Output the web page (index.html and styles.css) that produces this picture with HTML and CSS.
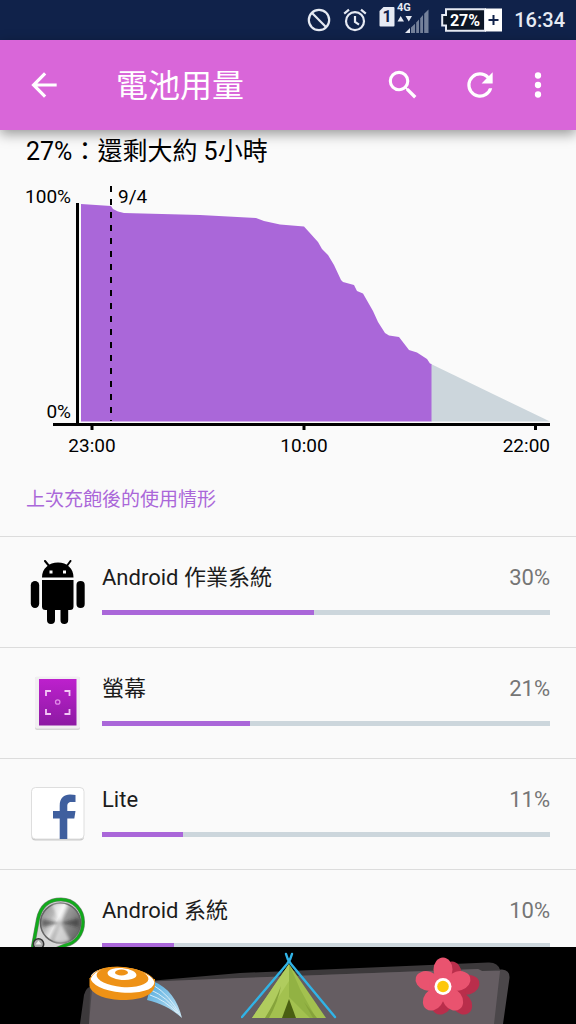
FILE: index.html
```html
<!DOCTYPE html>
<html lang="zh-Hant">
<head>
<meta charset="utf-8">
<meta name="viewport" content="width=device-width, initial-scale=1">
<title>電池用量</title>
<link rel="stylesheet" href="styles.css">
</head>
<body>
<div class="screen">
  <div class="status">
    <svg class="status-icon" viewBox="0 0 24 24" width="24" height="24" aria-hidden="true"><g fill="none" stroke="#e6eaf3" stroke-width="2.2"><circle cx="12" cy="12" r="10.2"/><path d="M4.8 4.8 19.2 19.2"/></g></svg>
    <svg class="status-icon" viewBox="0 0 24 24" width="24" height="24" aria-hidden="true"><g fill="none" stroke="#e6eaf3" stroke-width="2.2"><circle cx="12" cy="13.2" r="9"/><path d="M12 8v6l4 2.6M1.2 5.6 6 1.6M22.8 5.6 18 1.6"/></g></svg>
    <svg class="status-icon" viewBox="0 -3 50 40" width="50" height="40" role="img" aria-label="SIM 1 4G">
      <path fill="#e6eaf3" d="M4.5 4H14.5Q15.500 4 15.500 5V22.500Q15.500 23.500 14.500 23.500H1.500Q.5 23.500 .5 22.500V8Z"/>
      <text class="sim-number" x="8" y="19" text-anchor="middle">1</text>
      <text class="network" x="18" y="8">4G</text>
      <path fill="#e6eaf3" d="M18.500 18.500 21.700 13 25 18.500ZM26.500 13h6.500l-3.200 5.500Z"/>
      <path fill="#74819a" d="M32 24.500 36 20.800V30H32ZM37.200 19.500 40 16.500V30H37.200ZM41.200 15.300 44 12V30H41.200ZM45.200 10.700 49.500 6.500V30H45.200Z"/>
      <path fill="#e6eaf3" d="M26 30 31 25V30Z"/>
    </svg>
    <svg class="status-icon" viewBox="0 0 61 24" width="61" height="24" role="img" aria-label="27%">
      <path d="M5 1.200H44V22.800H5V17.500H1.200V7H5Z" fill="#0b1526" stroke="#e6eaf3" stroke-width="2"/>
      <path fill="#fff" d="M44 .5H61V23.500H44Z"/>
      <path fill="none" stroke="#10224a" stroke-width="2" d="M52.500 7v10M47.500 12h10"/>
      <text class="battery-level" x="24" y="18" text-anchor="middle">27%</text>
    </svg>
    <time class="clock">16:34</time>
  </div>

  <header class="appbar">
    <button class="bar-button back" type="button" aria-label="返回"><svg viewBox="0 0 24 24" width="38" height="38"><path d="M20 11H7.830l5.590-5.590L12 4l-8 8 8 8 1.410-1.410L7.830 13H20z"/></svg></button>
    <h1 class="appbar-title">電池用量</h1>
    <button class="bar-button" type="button" aria-label="搜尋"><svg viewBox="0 0 24 24" width="38" height="38"><path d="M15.500 14h-.79l-.28-.27A6.471 6.471 0 0 0 16 9.500 6.500 6.500 0 1 0 9.500 16c1.610 0 3.090-.59 4.230-1.570l.27.28v.79l5 4.990L20.490 19l-4.990-5zm-6 0C7.010 14 5 11.990 5 9.500S7.010 5 9.500 5 14 7.010 14 9.500 11.990 14 9.500 14z"/></svg></button>
    <button class="bar-button" type="button" aria-label="重新整理"><svg viewBox="0 0 24 24" width="38" height="38"><path d="M17.650 6.350A7.958 7.958 0 0 0 12 4a8 8 0 1 0 7.730 10h-2.080A6 6 0 1 1 12 6c1.660 0 3.140.69 4.220 1.780L13 11h7V4z"/></svg></button>
    <button class="bar-button more" type="button" aria-label="更多選項"><svg viewBox="0 0 24 24" width="38" height="38"><path d="M12 8a2 2 0 1 0 0-4 2 2 0 0 0 0 4zm0 2a2 2 0 1 0 0 4 2 2 0 0 0 0-4zm0 6a2 2 0 1 0 0 4 2 2 0 0 0 0-4z"/></svg></button>
  </header>

  <main class="content">
    <section class="usage">
      <p class="summary">27%：還剩大約 5小時</p>
      <svg class="chart" viewBox="26 184 524 276" role="img" aria-label="電池電量圖表">
        <path fill="#ccd6dc" d="M431 364 550 421.500H431Z"/>
        <path fill="#aa67d9" d="M81 204 111 206 113 209 118 211.500 124 213 200 215 256 218 264 221 280 224.500 304 226.500 309 232 318 242 322 249 328 255 334 265 341 280 343 282 354 285 357 291 363 293.500 373 311 378 322 385 333 389 335.500 399 337 409 350 417 352.500 427 359 430 363.500 431.500 364V421.500H81Z"/>
        <path class="midnight" d="M111 186V421"/>
        <path class="axis" d="M77.500 203V424M53 424.500H550.500M92 425V430M304 425V430M535.500 425V430"/>
        <g class="chart-label">
          <text x="71" y="203" text-anchor="end">100%</text>
          <text x="118" y="203">9/4</text>
          <text x="71" y="418" text-anchor="end">0%</text>
          <text x="92" y="452" text-anchor="middle">23:00</text>
          <text x="304" y="452" text-anchor="middle">10:00</text>
          <text x="550" y="452" text-anchor="end">22:00</text>
        </g>
      </svg>
    </section>
    <h2 class="section-title">上次充飽後的使用情形</h2>
    <ul class="apps">
      <li class="app">
        <svg class="app-icon" viewBox="0 0 64 64" width="64" height="64" aria-hidden="true">
          <path d="M16 17.500C16 8.500 23 2.500 32 2.500S47.500 8.500 47.500 17.500ZM16 20H47.500V46.500Q47.500 50 44 50H42.200V60Q42.200 64 38.300 64T34.500 60V50H29V60Q29 64 25 64T21 60V50H19.500Q16 50 16 46.500Z"/>
          <rect x="4.800" y="21" width="8.400" height="27" rx="4.200"/><rect x="50.500" y="21" width="8.200" height="27" rx="4.100"/>
          <path d="M19 1 23.500 6.500M44.500 1 40.500 6.500" stroke="#000" stroke-width="2" stroke-linecap="round"/>
          <rect x="23.500" y="10.500" width="3" height="3" fill="#fff"/><rect x="37" y="10.500" width="3" height="3" fill="#fff"/>
        </svg>
        <div class="app-body">
          <div class="app-line"><label class="app-name" for="use-os">Android 作業系統</label><span class="app-share">30%</span></div>
          <progress class="bar" id="use-os" max="448" value="212"></progress>
        </div>
      </li>
      <li class="app">
        <svg class="app-icon" viewBox="0 0 64 64" width="64" height="64" aria-hidden="true">
          <defs><linearGradient id="panel" x1="0" y1="0" x2="0" y2="1"><stop offset="0" stop-color="#bd20cd"/><stop offset="1" stop-color="#8d1aa3"/></linearGradient></defs>
          <rect x="9" y="6" width="45" height="53" rx="2" fill="#d6d6d6"/>
          <rect x="9" y="5.500" width="45" height="52" rx="2" fill="#f1eff1"/>
          <rect x="13" y="8" width="37.500" height="46.500" fill="url(#panel)"/>
          <path fill="none" stroke="#f2c7f5" stroke-width="1.800" d="M20 25V20H25M38.500 20H43.500V25M43.500 38V43H38.500M25 43H20V38"/>
          <circle cx="31.700" cy="31" r="2.200" fill="none" stroke="#e08be8" stroke-width="1.300"/>
        </svg>
        <div class="app-body">
          <div class="app-line"><label class="app-name" for="use-display">螢幕</label><span class="app-share">21%</span></div>
          <progress class="bar" id="use-display" max="448" value="148"></progress>
        </div>
      </li>
      <li class="app">
        <svg class="app-icon" viewBox="0 0 64 64" width="64" height="64" aria-hidden="true">
          <rect x="5.500" y="6" width="52.500" height="52.500" rx="4" fill="#c9c9c9"/>
          <rect x="5.500" y="5.500" width="52.500" height="51.500" rx="4" fill="#fff" stroke="#dedede"/>
          <path fill="#3f5f9e" d="M33.700 57V36.500H27V29H33.700V24C33.700 16 38 12.600 44 12.600Q47.500 12.600 49.500 13.100V20H45.500C42.300 20 41.300 21.500 41.300 24.500V29H49.500L48.300 36.500H41.300V57Z"/>
        </svg>
        <div class="app-body">
          <div class="app-line"><label class="app-name" for="use-lite">Lite</label><span class="app-share">11%</span></div>
          <progress class="bar" id="use-lite" max="448" value="81"></progress>
        </div>
      </li>
      <li class="app">
        <svg class="app-icon" viewBox="0 0 64 64" width="64" height="64" aria-hidden="true">
          <defs>
            <linearGradient id="metal" x1="0" y1="0" x2="1" y2=".5"><stop offset="0" stop-color="#8b8b8b"/><stop offset=".35" stop-color="#b6b6b6"/><stop offset=".5" stop-color="#e6e6e6"/><stop offset=".65" stop-color="#999"/><stop offset="1" stop-color="#6e6e6e"/></linearGradient>
            <filter id="soft"><feGaussianBlur stdDeviation="1.500"/></filter>
          </defs>
          <path d="M7 53 12 26C15 12 24 6.500 35 6.500C48 6.500 57 17 57 29C57 42 49 50 40 52L16 62C10 64 6 59 7 53Z" fill="#d6d6d6" stroke="#888" stroke-width="4"/>
          <path d="M7 53 12 26C15 12 24 6.500 35 6.500C48 6.500 57 17 57 29C57 42 49 50 40 52L16 62C10 64 6 59 7 53Z" fill="none" stroke="#12a91c" stroke-width="3"/>
          <circle cx="34.500" cy="30" r="20" fill="url(#metal)" stroke="#666" stroke-width="1.500"/>
          <g filter="url(#soft)">
            <path d="M34.500 30 26 12A19 19 0 0 1 41 12ZM34.500 30 27 48A19 19 0 0 0 44 47Z" fill="#fff" opacity=".6"/>
            <path d="M34.500 30 53 25V34ZM34.500 30 16 26V34Z" fill="#222" opacity=".5"/>
          </g>
          <circle cx="12.500" cy="51" r="5.200" fill="#aaa" stroke="#333" stroke-width="1.500"/><path d="M9.500 51.500 12.500 47.500 15.500 51.500Z" fill="#eee"/>
        </svg>
        <div class="app-body">
          <div class="app-line"><label class="app-name" for="use-system">Android 系統</label><span class="app-share">10%</span></div>
          <progress class="bar" id="use-system" max="448" value="72"></progress>
        </div>
      </li>
    </ul>
  </main>

  <nav class="navbar" aria-label="系統導覽">
    <svg class="navbar-backdrop" viewBox="0 0 576 77" preserveAspectRatio="none" aria-hidden="true">
      <path fill="#3c393b" d="M80 77 84 48Q86 40 92 39L240 26 488 15.500Q498 15 500 23L496 77Z"/>
      <path fill="#4b474a" d="M89 77 90 42Q91 40 99 39L240 31 478 22 482 24 502 22.500Q510 23 509.500 31L503 77Z"/>
      <path fill="#655d62" d="M89 77 92 42Q94 38 100 36.500L240 31 478 22 482 24H500L494 77Z"/>
    </svg>
    <button class="nav-button" type="button" aria-label="返回">
      <svg viewBox="0 0 100 77" width="100" height="77">
        <defs><linearGradient id="trail" x1="0" y1="0" x2="1" y2="1"><stop offset="0" stop-color="#4ba8de"/><stop offset="1" stop-color="#c8e4f2"/></linearGradient></defs>
        <path fill="url(#trail)" d="M67 34C84 40 93 54 97 71C86 61 75 56 62 53Z"/>
        <path fill="none" stroke="#d8eefa" stroke-width="1" d="M68 38Q85 48 95 68M66 43Q82 50 93 66M65 48Q80 53 92 66"/>
        <path fill="#ee9216" d="M4.500 31V39C7 48 22 53 38 53C56 53 69 48 70 38V32Z"/>
        <ellipse cx="37.500" cy="33" rx="32" ry="12.500" transform="rotate(5 37 33)" fill="#fff"/>
        <ellipse cx="37.500" cy="30" rx="26" ry="10" transform="rotate(5 38 30)" fill="#ee9216"/>
        <ellipse cx="37" cy="27" rx="14.500" ry="6" transform="rotate(5 37 27)" fill="#fff"/>
        <ellipse cx="36.500" cy="25.500" rx="6.500" ry="3" fill="#ee9216"/>
        <path fill="none" stroke="#ee9216" stroke-width="1" d="M5 32C10 21 24 19.500 37 20.500S66 26 69.500 34"/>
      </svg>
    </button>
    <button class="nav-button" type="button" aria-label="主畫面">
      <svg viewBox="0 0 100 77" width="100" height="77">
        <path fill="#a3c14f" d="M48 17 11 71H85Z"/>
        <path fill="#b0cc5e" d="M48 17 11 71H24L48 34Z"/>
        <path fill="#87a83c" d="M48 17V50L69 71H75L59 42Z" opacity=".6"/>
        <path fill="#86a33b" d="M40 39Q34 55 24 71H28Q37 55 40 39ZM63 55 76 71H72Z"/>
        <path fill="#495f12" d="M48 52 41 71H55Z"/>
        <path fill="none" stroke="#31b3e6" stroke-width="2.400" stroke-linecap="round" d="M51 7Q50 12 46 17L1 70M45 7Q46 12 50 17L94 70"/>
      </svg>
    </button>
    <button class="nav-button" type="button" aria-label="最近使用的應用程式">
      <svg viewBox="0 0 100 77" width="100" height="77">
        <defs><g id="petals"><ellipse cx="46" cy="22.500" rx="9.500" ry="12"/><ellipse cx="46" cy="22.500" rx="9.500" ry="12" transform="rotate(72 46 39)"/><ellipse cx="46" cy="22.500" rx="9.500" ry="12" transform="rotate(144 46 39)"/><ellipse cx="46" cy="22.500" rx="9.500" ry="12" transform="rotate(216 46 39)"/><ellipse cx="46" cy="22.500" rx="9.500" ry="12" transform="rotate(288 46 39)"/><circle cx="46" cy="39" r="14"/></g></defs>
        <use href="#petals" transform="translate(9 4)" fill="#b92e4b"/>
        <use href="#petals" fill="#e9536f"/>
        <circle cx="46" cy="39.500" r="8.500" fill="#fff"/><circle cx="46" cy="39.500" r="5.800" fill="#fdc70c"/>
      </svg>
    </button>
  </nav>
</div>
</body>
</html>
```
FILE: styles.css
```css
* {
  box-sizing: border-box;
}

body {
  margin: 0;
  background: #fafafa;
  color: #1c1c1c;
  font-family: Roboto, "Noto Sans CJK TC", sans-serif;
}

h1, h2, p, ul {
  margin: 0;
  padding: 0;
}

button {
  border: 0;
  padding: 0;
  background: none;
  cursor: pointer;
}

.screen {
  display: flex;
  flex-direction: column;
  height: 100vh;
}

.status {
  display: flex;
  flex: none;
  align-items: center;
  justify-content: flex-end;
  gap: 12px;
  height: 40px;
  padding: 0 11px;
  background: #10224a;
  color: #e6eaf3;
}

.status-icon {
  flex: none;
}

.clock {
  font-size: 20px;
  font-weight: 500;
}

.sim-number {
  fill: #10224a;
  font-size: 16px;
  font-weight: 700;
}

.network {
  fill: #e6eaf3;
  font-size: 11px;
  font-weight: 700;
}

.battery-level {
  fill: #fff;
  font-size: 16px;
  font-weight: 700;
}

.appbar {
  position: relative;
  display: flex;
  flex: none;
  align-items: center;
  height: 90px;
  padding: 0 18px;
  background: #d966d9;
  box-shadow: 0 4px 12px rgba(0, 0, 0, 0.4);
}

.appbar-title {
  flex: 1;
  margin-left: 46px;
  padding-top: 2px;
  color: #fff;
  font-size: 32px;
  font-weight: 400;
  line-height: 48px;
}

.bar-button {
  display: flex;
  flex: none;
  align-items: center;
  justify-content: center;
  width: 77px;
  height: 48px;
  fill: #fff;
}

.bar-button.back {
  width: 52px;
}

.bar-button.more {
  width: 40px;
}

.content {
  flex: 1;
  min-height: 0;
  overflow: hidden;
}

.usage {
  padding: 6px 26px 0;
}

.summary {
  color: #000;
  font-size: 25px;
  line-height: 32px;
}

.chart {
  display: block;
  width: 100%;
  margin-top: 16px;
}

.chart-label {
  fill: #000;
  font-size: 19px;
}

.axis {
  fill: none;
  stroke: #000;
  stroke-width: 3px;
}

.midnight {
  fill: none;
  stroke: #000;
  stroke-width: 2px;
  stroke-dasharray: 6 7;
}

.section-title {
  padding: 26px 26px 22px;
  color: #aa67d9;
  font-size: 19px;
  font-weight: 400;
  line-height: 28px;
}

.apps {
  list-style: none;
}

.app {
  display: flex;
  align-items: center;
  gap: 12px;
  padding: 0 26px;
  border-top: 1px solid #dcdcdc;
}

.app-icon {
  flex: none;
}

.app-body {
  flex: 1;
  padding: 25px 0 32px;
}

.app-line {
  display: flex;
  justify-content: space-between;
  margin-bottom: 16px;
  font-size: 22px;
  line-height: 32px;
}

.app-share {
  color: #757575;
}

.bar {
  display: block;
  width: 100%;
  height: 5px;
  border: 0;
  appearance: none;
  background: #ccd6dc;
}

.bar::-webkit-progress-bar {
  background: #ccd6dc;
}

.bar::-webkit-progress-value {
  background: #aa67d9;
}

.bar::-moz-progress-bar {
  background: #aa67d9;
}

.navbar {
  position: relative;
  display: grid;
  flex: none;
  grid-template-columns: repeat(3, 1fr);
  height: 77px;
  padding: 0 51px 0 57px;
  background: #000;
}

.navbar-backdrop {
  position: absolute;
  inset: 0;
  width: 100%;
  height: 100%;
}

.nav-button {
  position: relative;
  display: flex;
  justify-content: center;
}
```
